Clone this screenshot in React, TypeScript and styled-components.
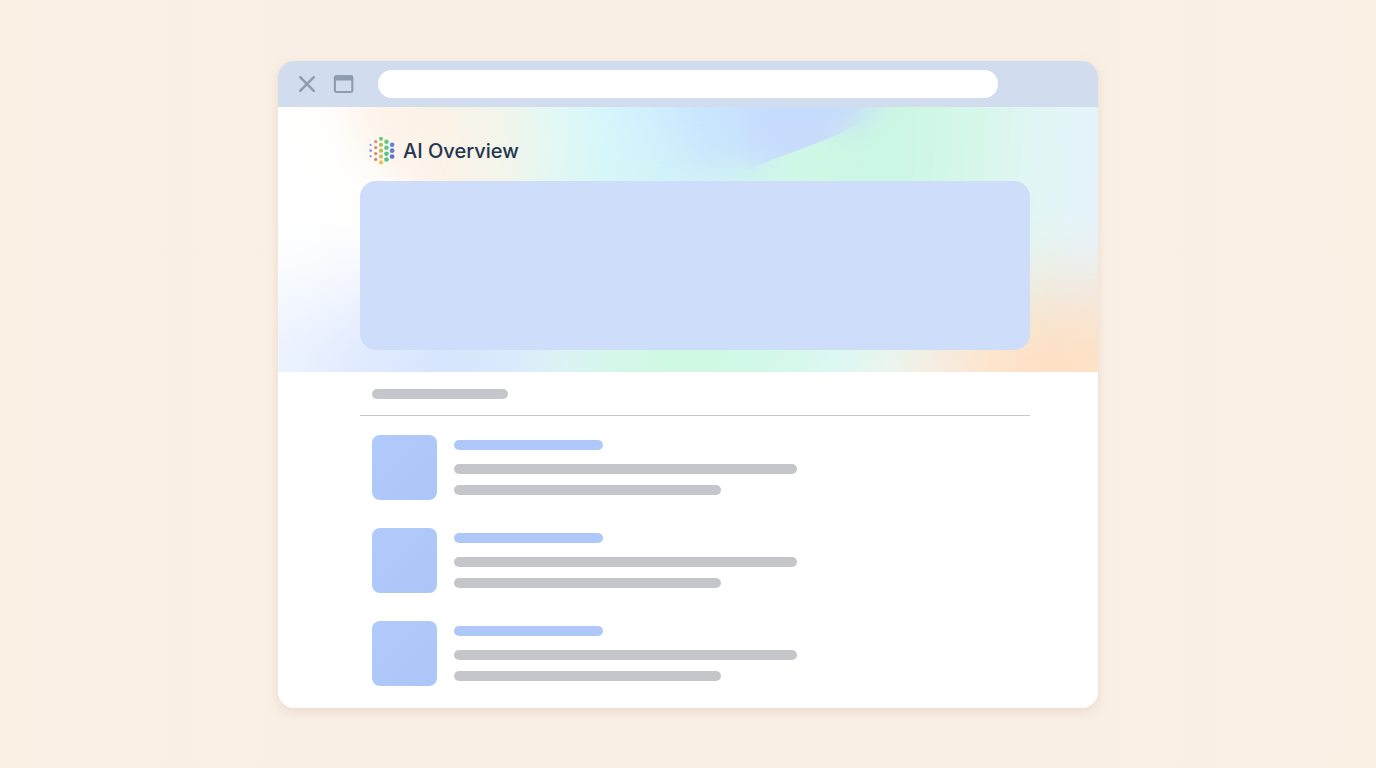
import React from "react";
import styled, { createGlobalStyle } from "styled-components";

const GlobalStyle = createGlobalStyle`
  *, *::before, *::after { box-sizing: border-box; }
  body {
    margin: 0;
    font-family: Inter, "Liberation Sans", sans-serif;
    background: linear-gradient(90deg, #f9f1e4 0%, #f9f1e5 8%, #faefe4 22%, #faefe4 78%, #f9f1e5 92%, #f9f1e4 100%);
  }
`;

const Page = styled.main`
  display: flex;
  justify-content: center;
  align-items: center;
  min-height: 100vh;
  padding: 33px 24px 32px;
`;

const BrowserWindow = styled.section`
  width: 100%;
  max-width: 820px;
  background: #ffffff;
  border-radius: 16px;
  overflow: hidden;
  box-shadow: 0 4px 12px rgba(150, 120, 90, 0.16);
`;

const Toolbar = styled.header`
  display: flex;
  align-items: center;
  gap: 14px;
  padding: 9px 100px 9px 18px;
  background: #d1dcee;
`;

const ToolButton = styled.button`
  display: flex;
  padding: 0;
  border: 0;
  background: none;
  color: #8e9bb1;
`;

const AddressBar = styled.input`
  flex: 1;
  min-width: 0;
  height: 28px;
  margin-left: 10px;
  padding: 0 16px;
  border: 0;
  border-radius: 14px;
  background: #ffffff;
  font: inherit;
  outline: none;
`;

const Overview = styled.section`
  position: relative;
  padding: 28px 68px 22px 82px;
`;

const Backdrop = styled.svg`
  position: absolute;
  inset: 0;
  width: 100%;
  height: 100%;
`;

const OverviewTitle = styled.h1`
  position: relative;
  display: flex;
  align-items: center;
  gap: 7px;
  height: 32px;
  margin: 0 0 14px;
  padding-left: 8px;
  color: #22364f;
  font-size: 20px;
  line-height: 32px;
  font-weight: 500;
`;

const OverviewCard = styled.div`
  position: relative;
  height: 169px;
  border-radius: 16px;
  background: #cedefa;
`;

const Results = styled.section`
  padding: 17px 68px 22px 82px;
`;

const ResultsHeader = styled.div`
  padding: 0 12px 16px;
  border-bottom: 1px solid #c8c9cc;
`;

const ResultList = styled.ul`
  display: flex;
  flex-direction: column;
  gap: 28px;
  margin: 0;
  padding: 19px 12px 0;
  list-style: none;
`;

const Result = styled.li`
  display: flex;
  gap: 17px;
`;

const Thumbnail = styled.div`
  flex: none;
  width: 65px;
  height: 65px;
  border-radius: 8px;
  background: linear-gradient(135deg, #afcafb, #acc7f7);
`;

const Lines = styled.div`
  flex: 1;
  display: flex;
  flex-direction: column;
  gap: 11px;
  padding-top: 5px;
`;

const Bar = styled.div<{ $width: number; $accent?: boolean }>`
  width: 100%;
  max-width: ${(p) => p.$width}px;
  height: 10px;
  margin-bottom: ${(p) => (p.$accent ? 3 : 0)}px;
  border-radius: 5px;
  background: ${(p) => (p.$accent ? "#aec9f9" : "#c5c6ca")};
`;

const CloseIcon = () => (
  <svg width="22" height="22" viewBox="0 0 22 22" fill="none" stroke="currentColor" strokeWidth="2.4" strokeLinecap="round" aria-hidden="true">
    <path d="M4.2 4.2 17.8 17.8M17.8 4.2 4.2 17.8" />
  </svg>
);

const WindowIcon = () => (
  <svg width="22" height="22" viewBox="0 0 22 22" aria-hidden="true">
    <rect x="2.9" y="3" width="17.4" height="16" rx="1.4" fill="none" stroke="currentColor" strokeWidth="2.1" />
    <path d="M3 3.4h17.2v4H3z" fill="currentColor" />
  </svg>
);

const dots: [number, number, number, string][] = [
  [2.6, 9.9, 1.1, "#8296dc"], [2.6, 15.6, 1.3, "#7a90da"], [2.6, 21.3, 1.1, "#7488cb"],
  [7.7, 6.7, 1.6, "#df8c79"], [7.7, 12.6, 1.6, "#dd8375"], [7.7, 18.5, 1.6, "#dc7f70"], [7.7, 24.4, 1.6, "#dc806c"],
  [13, 3.8, 2, "#78c66c"], [13, 9.8, 2.1, "#9dc65c"], [13, 15.7, 2.1, "#b4c355"], [13, 21.6, 2.1, "#d6c04c"], [13, 27.4, 2.1, "#edc052"],
  [18.5, 6.8, 2.3, "#62ca86"], [18.5, 12.8, 2.3, "#58c991"], [18.5, 18.8, 2.3, "#50c592"], [18.5, 24.5, 2.3, "#4fc687"],
  [24.1, 9.8, 2.4, "#6487d6"], [24.1, 15.7, 2.4, "#5e7fd2"], [24.1, 21.6, 2.4, "#5b78cd"],
];

const DotsLogo = () => (
  <svg width="28" height="32" viewBox="0 0 28 32" aria-hidden="true">
    {dots.map(([cx, cy, r, fill]) => (
      <circle key={`${cx}-${cy}`} cx={cx} cy={cy} r={r} fill={fill} />
    ))}
  </svg>
);

const topStops: [number, string][] = [
  [0, "#ffffff"], [0.06, "#fffdfb"], [0.13, "#fef3e9"], [0.2, "#faf2e7"], [0.27, "#f2f5eb"],
  [0.33, "#e4f8f3"], [0.39, "#d8f7fb"], [0.46, "#cff0fd"], [0.52, "#cae6fe"],
  [0.61, "#c7ddfe"], [0.7, "#c8dcfc"], [1, "#c8dcfc"],
];

const greenStops: [number, string][] = [
  [0, "#d0f6ef"], [0.56, "#d0f7ec"], [0.66, "#cef7e4"], [0.76, "#cbf7e3"],
  [0.85, "#d7f7ea"], [0.93, "#e2f6f5"], [1, "#e6f3fd"],
];

const bottomStops: [number, string][] = [
  [0, "#edf3ff"], [0.1, "#e1ebff"], [0.2, "#d7e5fe"], [0.28, "#dae9fd"], [0.35, "#dbf3f5"],
  [0.42, "#d5f7ea"], [0.49, "#cff9e2"], [0.6, "#d2f9e8"], [0.69, "#ddf8f3"],
  [0.76, "#ebf5ed"], [0.82, "#f7ecdf"], [0.88, "#fde5cd"], [0.95, "#fee0c4"], [1, "#fee1c6"],
];

const Stops = ({ items }: { items: [number, string][] }) => (
  <>
    {items.map(([offset, color]) => (
      <stop key={offset} offset={offset} stopColor={color} />
    ))}
  </>
);

const curve = "M380 100 C430 80 455 70 482 58 C512 44 545 37 578 18 C592 8 600 -2 608 -30";

const AuroraBackdrop = () => (
  <Backdrop viewBox="0 0 820 265" preserveAspectRatio="none" aria-hidden="true">
    <defs>
      <linearGradient id="top" gradientUnits="userSpaceOnUse" x1="0" y1="0" x2="770" y2="-170"><Stops items={topStops} /></linearGradient>
      <linearGradient id="green" gradientUnits="userSpaceOnUse" x1="0" y1="0" x2="820" y2="60"><Stops items={greenStops} /></linearGradient>
      <linearGradient id="bottom" gradientUnits="userSpaceOnUse" x1="0" y1="265" x2="800" y2="345"><Stops items={bottomStops} /></linearGradient>
      <linearGradient id="fade" x1="0" y1="0" x2="0" y2="1">
        <stop offset="0.4" stopColor="#fff" />
        <stop offset="0.5" stopColor="#e4e4e4" />
        <stop offset="0.62" stopColor="#a8a8a8" />
        <stop offset="0.75" stopColor="#585858" />
        <stop offset="0.86" stopColor="#202020" />
        <stop offset="0.96" stopColor="#000" />
      </linearGradient>
      <radialGradient id="spot" gradientUnits="userSpaceOnUse" cx="525" cy="38" r="64">
        <stop offset="0" stopColor="#fff" />
        <stop offset="0.3" stopColor="#fff" />
        <stop offset="1" stopColor="#000" />
      </radialGradient>
      <filter id="soft" filterUnits="userSpaceOnUse" x="200" y="-200" width="900" height="700">
        <feGaussianBlur stdDeviation="14" />
      </filter>
      <filter id="softer" filterUnits="userSpaceOnUse" x="-200" y="-100" width="1000" height="500">
        <feGaussianBlur stdDeviation="24" />
      </filter>
      <mask id="vertical"><rect width="820" height="265" fill="url(#fade)" /></mask>
      <mask id="near"><rect width="820" height="265" fill="url(#spot)" /></mask>
      <clipPath id="above"><path d={`${curve} L380 -30Z`} /></clipPath>
    </defs>
    <rect width="820" height="265" fill="url(#bottom)" />
    <g mask="url(#vertical)">
      <rect width="820" height="265" fill="url(#top)" />
      <ellipse cx="390" cy="90" rx="130" ry="28" fill="#d2f6f2" opacity="0.7" filter="url(#softer)" />
      <path d="M-80 60H130V300H-80Z" fill="#ffffff" opacity="0.8" filter="url(#softer)" />
      <path d={`${curve} L1000 -30V320H380Z`} fill="url(#green)" filter="url(#soft)" />
      <g mask="url(#near)">
        <path d={`${curve} L820 -30V265H380Z`} fill="url(#green)" />
        <g clipPath="url(#above)">
          <rect width="820" height="265" fill="#c8dcfc" />
        </g>
      </g>
    </g>
  </Backdrop>
);

const results = ["first", "second", "third"];

export default function App() {
  return (
    <>
      <GlobalStyle />
      <Page>
        <BrowserWindow>
          <Toolbar>
            <ToolButton type="button" aria-label="Close"><CloseIcon /></ToolButton>
            <ToolButton type="button" aria-label="Window"><WindowIcon /></ToolButton>
            <AddressBar type="text" aria-label="Address" />
          </Toolbar>
          <Overview>
            <AuroraBackdrop />
            <OverviewTitle>
              <DotsLogo />
              AI Overview
            </OverviewTitle>
            <OverviewCard />
          </Overview>
          <Results>
            <ResultsHeader>
              <Bar $width={136} />
            </ResultsHeader>
            <ResultList>
              {results.map((id) => (
                <Result key={id}>
                  <Thumbnail />
                  <Lines>
                    <Bar $width={149} $accent />
                    <Bar $width={343} />
                    <Bar $width={267} />
                  </Lines>
                </Result>
              ))}
            </ResultList>
          </Results>
        </BrowserWindow>
      </Page>
    </>
  );
}
